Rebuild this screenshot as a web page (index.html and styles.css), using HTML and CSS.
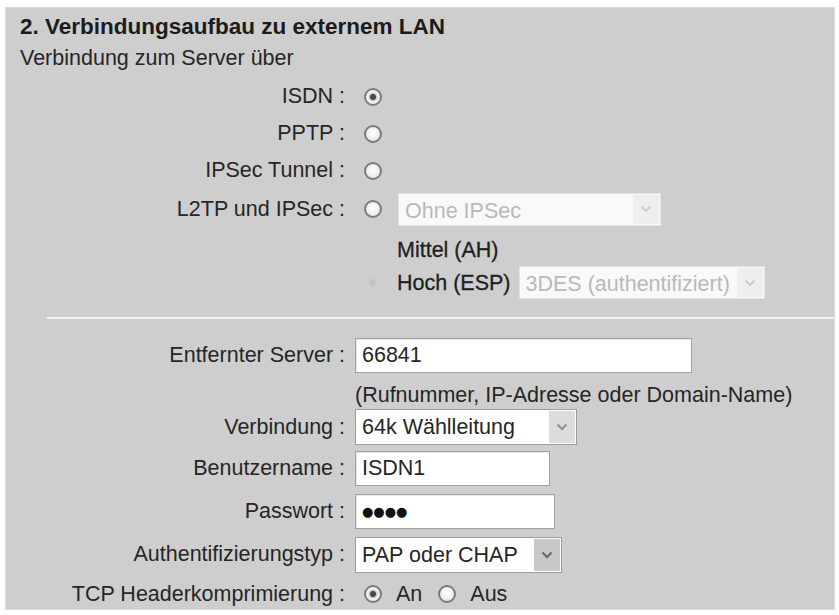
FILE: index.html
```html
<!DOCTYPE html>
<html lang="de">
<head>
<meta charset="utf-8">
<title>Verbindungsaufbau zu externem LAN</title>
<link rel="stylesheet" href="styles.css">
</head>
<body>
<div class="panel">
  <h2 class="title">2. Verbindungsaufbau zu externem LAN</h2>
  <div class="subtitle">Verbindung zum Server über</div>

  <div class="row r-isdn">
    <span class="lbl">ISDN :</span>
    <div class="ctl"><input class="radio" type="radio" name="conn" checked></div>
  </div>
  <div class="row r-std">
    <span class="lbl">PPTP :</span>
    <div class="ctl"><input class="radio" type="radio" name="conn"></div>
  </div>
  <div class="row r-std">
    <span class="lbl">IPSec Tunnel :</span>
    <div class="ctl"><input class="radio" type="radio" name="conn"></div>
  </div>
  <div class="row r-l2tp">
    <span class="lbl">L2TP und IPSec :</span>
    <div class="ctl">
      <input class="radio" type="radio" name="conn">
      <div class="select disabled w-ohne">
        <span class="val">Ohne IPSec</span>
        <span class="arr"><svg width="12" height="8" viewBox="0 0 12 8"><path d="M1.5 1.5 L6 6 L10.5 1.5" fill="none" stroke="currentColor" stroke-width="2"/></svg></span>
      </div>
    </div>
  </div>
  <div class="row r-mittel">
    <span class="lbl"></span>
    <div class="ctl indent"><span class="sublbl">Mittel (AH)</span></div>
  </div>
  <div class="row r-hoch">
    <span class="lbl"></span>
    <div class="ctl">
      <span class="ghost"></span>
      <span class="sublbl hoch">Hoch (ESP)</span>
      <div class="select disabled w-3des">
        <span class="val">3DES (authentifiziert)</span>
        <span class="arr"><svg width="12" height="8" viewBox="0 0 12 8"><path d="M1.5 1.5 L6 6 L10.5 1.5" fill="none" stroke="currentColor" stroke-width="2"/></svg></span>
      </div>
    </div>
  </div>

  <div class="sep"></div>

  <div class="row r-server">
    <span class="lbl">Entfernter Server :</span>
    <div class="ctl"><input class="text w-server" type="text" value="66841"></div>
  </div>
  <div class="row r-hint">
    <span class="lbl"></span>
    <div class="ctl hint">(Rufnummer, IP-Adresse oder Domain-Name)</div>
  </div>
  <div class="row r-verb">
    <span class="lbl">Verbindung :</span>
    <div class="ctl">
      <div class="select w-verb">
        <span class="val">64k Wählleitung</span>
        <span class="arr light"><svg width="12" height="8" viewBox="0 0 12 8"><path d="M1.5 1.5 L6 6 L10.5 1.5" fill="none" stroke="currentColor" stroke-width="2"/></svg></span>
      </div>
    </div>
  </div>
  <div class="row r-field">
    <span class="lbl">Benutzername :</span>
    <div class="ctl"><input class="text w-user" type="text" value="ISDN1"></div>
  </div>
  <div class="row r-field">
    <span class="lbl">Passwort :</span>
    <div class="ctl"><input class="text pwd w-pass" type="text" value="●●●●"></div>
  </div>
  <div class="row r-field">
    <span class="lbl">Authentifizierungstyp :</span>
    <div class="ctl">
      <div class="select w-auth">
        <span class="val">PAP oder CHAP</span>
        <span class="arr dark"><svg width="12" height="8" viewBox="0 0 12 8"><path d="M1.5 1.5 L6 6 L10.5 1.5" fill="none" stroke="currentColor" stroke-width="2"/></svg></span>
      </div>
    </div>
  </div>
  <div class="row r-tcp">
    <span class="lbl">TCP Headerkomprimierung :</span>
    <div class="ctl">
      <input class="radio" type="radio" name="tcp" checked>
      <span class="opt">An</span>
      <input class="radio" type="radio" name="tcp">
      <span class="opt">Aus</span>
    </div>
  </div>
</div>
</body>
</html>
```

FILE: styles.css
```css
html, body {
  margin: 0;
  background: #ffffff;
}

body {
  font-family: "Liberation Sans", Arial, sans-serif;
  font-size: 21.5px;
  color: #262626;
}

.panel {
  margin: 7px 4px 0 5px;
  height: 603px;
  box-sizing: border-box;
  background: #cecece;
  border: 1px solid #dadada;
  padding: 5px 0 0 14px;
}

.title {
  margin: 0;
  font-size: 22.5px;
  font-weight: bold;
  line-height: 28px;
  height: 28px;
  color: #1c1c1c;
}

.subtitle {
  margin-top: 4px;
  line-height: 26px;
  height: 26px;
}

.row {
  display: flex;
  align-items: center;
}

.lbl {
  flex: none;
  width: 325px;
  margin-right: 10px;
  text-align: right;
  white-space: nowrap;
}

.ctl {
  display: flex;
  align-items: center;
  white-space: nowrap;
}

.r-isdn { margin-top: 7px; height: 37px; }
.r-std { height: 37px; }
.r-l2tp { height: 40px; }
.r-mittel { height: 37px; padding-top: 5px; box-sizing: border-box; }
.r-hoch { height: 33px; }
.r-server { height: 36px; }
.r-hint { height: 34px; align-items: flex-end; }
.r-verb { height: 40px; }
.r-field { height: 43px; }
.r-tcp { height: 36px; }

.indent { padding-left: 42px; }

.sublbl {
  line-height: 24px;
  color: #1f1f1f;
  -webkit-text-stroke: 0.3px #1f1f1f;
}

.hoch { margin-left: 21px; }

.ghost {
  width: 7px;
  height: 7px;
  border-radius: 50%;
  background: #c3c3c3;
  margin-left: 14px;
}

/* radio buttons */
.radio {
  -webkit-appearance: none;
  appearance: none;
  box-sizing: border-box;
  width: 18px;
  height: 18px;
  margin: 0 0 0 9px;
  border-radius: 50%;
  border: 2px solid #7c7c7c;
  background: radial-gradient(circle at 50% 45%, #ffffff 0, #f2f2f2 45%, #d9d9d9 100%);
  flex: none;
}

.radio:checked {
  background: radial-gradient(circle at 50% 50%, #4a4a4a 0, #4a4a4a 2.6px, #cfcfcf 3.6px, #f4f4f4 5.5px, #dcdcdc 100%);
}

.opt { margin: 0 7px 0 14px; }

/* select look-alikes */
.select {
  display: flex;
  align-items: stretch;
  box-sizing: border-box;
  height: 36px;
  padding: 1px;
  border: 1px solid #9c9c9c;
  background: #ffffff;
}

.select .val {
  flex: 1;
  padding-left: 5px;
  line-height: 32px;
  overflow: hidden;
  white-space: nowrap;
}

.select .arr {
  flex: none;
  width: 26px;
  display: flex;
  align-items: center;
  justify-content: center;
  background: #dcdcdc;
  color: #8593a2;
}

.select .arr.dark {
  background: #c8c8c8;
  color: #5d6b79;
}

.select.disabled {
  border-color: #e2e2e2;
  background: #f9f9f9;
  color: #b9b9b9;
  height: 33px;
}

.select.disabled .arr {
  background: #eeeeee;
  color: #cdcdcd;
}

.w-ohne { width: 263px; margin-left: 16px; height: 32px; }
.w-3des { width: 246px; margin-left: 8px; }
.w-verb { width: 222px; }
.w-auth { width: 207px; }

/* text inputs */
.text {
  box-sizing: border-box;
  height: 35px;
  margin: 0;
  padding: 0 6px;
  border: 1px solid #a2a2a2;
  box-shadow: inset 1px 1px 0 #e6e6e6;
  background: #ffffff;
  font-family: "Liberation Sans", Arial, sans-serif;
  font-size: 21.5px;
  color: #262626;
  outline: none;
}

.w-server { width: 337px; }
.w-user { width: 195px; }
.w-pass { width: 200px; }

.pwd {
  font-family: "DejaVu Sans", sans-serif;
  font-size: 13px;
  letter-spacing: 0;
  color: #111;
}

.hint {
  line-height: 24px;
}

.sep {
  height: 2px;
  background: #f2f2f2;
  margin: 18px 0 18px 27px;
}
```
